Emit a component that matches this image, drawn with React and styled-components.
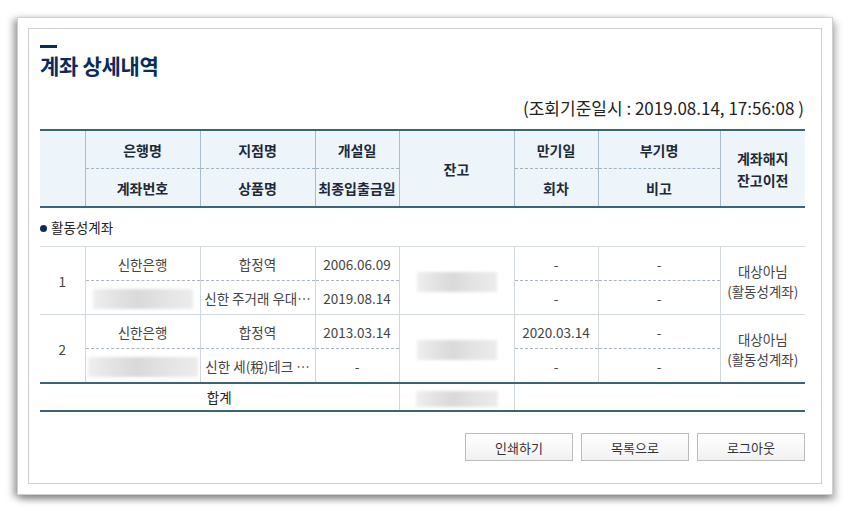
import React from "react";
import styled, { createGlobalStyle } from "styled-components";

const GlobalStyle = createGlobalStyle`
  body {
    margin: 0;
    background: #fff;
    font-family: "Noto Sans CJK KR", "Noto Sans", sans-serif;
  }
`;

const accounts = [
  {
    no: 1,
    bank: "신한은행",
    branch: "합정역",
    product: "신한 주거래 우대…",
    opened: "2006.06.09",
    lastTx: "2019.08.14",
    due: "-",
    round: "-",
    sub: "-",
    note: "-",
    accW: 100,
  },
  {
    no: 2,
    bank: "신한은행",
    branch: "합정역",
    product: "신한 세(稅)테크 …",
    opened: "2013.03.14",
    lastTx: "-",
    due: "2020.03.14",
    round: "-",
    sub: "-",
    note: "-",
    accW: 110,
  },
];

function Masked({ width = 80, height = 20 }) {
  return <Blur style={{ width, height }} />;
}

export default function App() {
  return (
    <Page>
      <GlobalStyle />
      <Card>
        <Inner>
          <TitleBar />
          <Title>계좌 상세내역</Title>
          <Stamp>(조회기준일시 : 2019.08.14, 17:56:08 )</Stamp>

          <Table>
            <colgroup>
              <col style={{ width: 45 }} />
              <col style={{ width: 115 }} />
              <col style={{ width: 115 }} />
              <col style={{ width: 84 }} />
              <col style={{ width: 115 }} />
              <col style={{ width: 84 }} />
              <col style={{ width: 122 }} />
              <col style={{ width: 85 }} />
            </colgroup>
            <thead>
              <tr>
                <Th rowSpan={2} />
                <Th>은행명</Th>
                <Th>지점명</Th>
                <Th>개설일</Th>
                <Th rowSpan={2}>잔고</Th>
                <Th>만기일</Th>
                <Th>부기명</Th>
                <Th rowSpan={2}>
                  계좌해지
                  <br />
                  잔고이전
                </Th>
              </tr>
              <tr>
                <Th dashed>계좌번호</Th>
                <Th dashed>상품명</Th>
                <Th dashed>최종입출금일</Th>
                <Th dashed>회차</Th>
                <Th dashed>비고</Th>
              </tr>
            </thead>
            <tbody>
              <tr>
                <Section colSpan={8}>
                  <Dot />
                  활동성계좌
                </Section>
              </tr>
              {accounts.map((a) => (
                <React.Fragment key={a.no}>
                  <tr>
                    <Td rowSpan={2} top>{a.no}</Td>
                    <Td top>{a.bank}</Td>
                    <Td top>{a.branch}</Td>
                    <Td top>{a.opened}</Td>
                    <Td rowSpan={2} top>
                      <Masked width={80} height={20} />
                    </Td>
                    <Td top>{a.due}</Td>
                    <Td top>{a.sub}</Td>
                    <Td rowSpan={2} top>
                      대상아님
                      <br />
                      (활동성계좌)
                    </Td>
                  </tr>
                  <tr>
                    <Td dashed>
                      <Masked width={a.accW} height={20} />
                    </Td>
                    <Td dashed>{a.product}</Td>
                    <Td dashed>{a.lastTx}</Td>
                    <Td dashed>{a.round}</Td>
                    <Td dashed>{a.note}</Td>
                  </tr>
                </React.Fragment>
              ))}
              <tr>
                <Total colSpan={4}>합계</Total>
                <Total>
                  <Masked width={82} height={16} />
                </Total>
                <Total colSpan={3} />
              </tr>
            </tbody>
          </Table>

          <Buttons>
            <Button>인쇄하기</Button>
            <Button>목록으로</Button>
            <Button>로그아웃</Button>
          </Buttons>
        </Inner>
      </Card>
    </Page>
  );
}

const Page = styled.div`
  width: 849px;
  height: 511px;
  padding: 17px 0 0 17px;
  box-sizing: border-box;
`;

const Card = styled.div`
  width: 816px;
  height: 478px;
  box-sizing: border-box;
  border: 1px solid #cfcfcf;
  background: #fff;
  padding: 10px;
  box-shadow: -4px 2px 7px rgba(0, 0, 0, 0.35), 3px 5px 7px rgba(0, 0, 0, 0.28);
`;

const Inner = styled.div`
  height: 100%;
  box-sizing: border-box;
  border: 1px solid #cfcfcf;
  padding: 16px 17px 0 11px;
`;

const TitleBar = styled.div`
  width: 17px;
  height: 3px;
  background: #0b2b5c;
`;

const Title = styled.h1`
  margin: 5px 0 0;
  font-size: 21px;
  line-height: 25px;
  font-weight: 700;
  color: #0b2b5c;
  letter-spacing: -0.3px;
`;

const Stamp = styled.div`
  margin-top: 19px;
  text-align: right;
  font-size: 17px;
  line-height: 22px;
  color: #222;
`;

const Table = styled.table`
  margin-top: 10px;
  width: 765px;
  table-layout: fixed;
  border-collapse: collapse;
  border-top: 2px solid #3a6478;
  font-size: 13.5px;
  color: #444;
`;

const Th = styled.th`
  height: 37px;
  padding: 0;
  background: #edf4fa;
  border-left: 1px solid #a8bccb;
  border-top: ${(p) => (p.dashed ? "1px dashed #9fb3c3" : "none")};
  border-bottom: 2px solid #3a6478;
  font-size: 14px;
  font-weight: 600;
  line-height: 22px;
  color: #1d2a38;
  text-align: center;
  vertical-align: middle;

  &:first-child {
    border-left: none;
  }
  thead tr:first-child & {
    border-bottom: ${(p) => (p.rowSpan ? "2px solid #3a6478" : "none")};
  }
  thead tr:nth-child(2) &:first-child {
    border-left: 1px solid #a8bccb;
  }
`;

const Section = styled.td`
  height: 38px;
  padding: 0;
  font-size: 13.5px;
  color: #222;
  border-bottom: 1px solid #d4dbe1;
`;

const Dot = styled.span`
  display: inline-block;
  width: 7px;
  height: 7px;
  border-radius: 50%;
  background: #0b2b5c;
  margin: 0 4px 1px 0;
  vertical-align: middle;
`;

const Td = styled.td`
  height: 33px;
  padding: 0;
  text-align: center;
  vertical-align: middle;
  line-height: 20px;
  color: #444;
  white-space: nowrap;
  overflow: hidden;
  border-left: 1px solid #d0d8de;
  border-top: ${(p) =>
    p.dashed ? "1px dashed #a9b6c1" : p.top ? "1px solid #d0d8de" : "none"};

  tr > &:first-child {
    border-left: ${(p) => (p.rowSpan ? "none" : "1px solid #d0d8de")};
  }
`;

const Total = styled.td`
  height: 26px;
  padding: 0;
  text-align: center;
  font-size: 13.5px;
  color: #222;
  border-top: 2px solid #3a6478;
  border-bottom: 2px solid #3a6478;
  border-left: 1px solid #d0d8de;

  &:first-child {
    border-left: none;
  }
`;

const Blur = styled.div`
  display: inline-block;
  vertical-align: middle;
  background: linear-gradient(
    90deg,
    #efefef 0%,
    #e4e4e4 20%,
    #d9d9d9 45%,
    #e3e3e3 70%,
    #ececec 100%
  );
  filter: blur(1.5px);
`;

const Buttons = styled.div`
  display: flex;
  justify-content: flex-end;
  gap: 8px;
  margin-top: 21px;
  width: 765px;
`;

const Button = styled.button`
  width: 108px;
  height: 28px;
  border: 1px solid #bcbcbc;
  background: linear-gradient(#ffffff, #f1f1f1);
  font-family: "Noto Sans CJK KR", "Noto Sans", sans-serif;
  font-size: 13px;
  color: #333;
  padding: 0;
  cursor: pointer;
`;
